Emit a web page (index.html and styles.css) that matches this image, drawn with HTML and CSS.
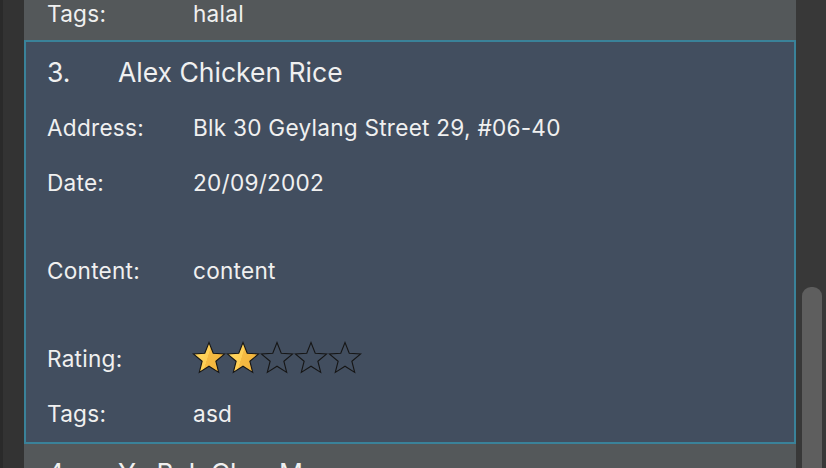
FILE: index.html
```html
<!DOCTYPE html>
<html>
<head>
<meta charset="utf-8">
<link rel="stylesheet" href="styles.css">
</head>
<body>
<svg class="defs" width="0" height="0">
  <defs>
    <linearGradient id="gold" x1="0" y1="0" x2="1" y2="0.3">
      <stop offset="0" stop-color="#ffd862"/>
      <stop offset="0.55" stop-color="#ffcf55"/>
      <stop offset="0.56" stop-color="#f6bb43"/>
      <stop offset="1" stop-color="#f3b53d"/>
    </linearGradient>
    <symbol id="star" viewBox="0 0 34 34">
      <polygon points="17,1.5 21.23,12.18 32.69,12.9 23.85,20.22 26.7,31.35 17,25.2 7.3,31.35 10.15,20.22 1.31,12.9 12.77,12.18"/>
    </symbol>
  </defs>
</svg>
<div class="app">
  <div class="gutter"></div>
  <div class="list">
    <div class="card partial">
      <div class="row tags-top"><span class="label">Tags:</span><span class="value">halal</span></div>
    </div>
    <div class="card selected">
      <div class="title"><span class="idx">3.</span><span class="name">Alex Chicken Rice</span></div>
      <div class="row r-address"><span class="label">Address:</span><span class="value">Blk 30 Geylang Street 29, #06-40</span></div>
      <div class="row r-date"><span class="label">Date:</span><span class="value">20/09/2002</span></div>
      <div class="row r-content"><span class="label">Content:</span><span class="value">content</span></div>
      <div class="row r-rating"><span class="label">Rating:</span>
        <span class="stars">
          <svg class="star on"><use href="#star"/></svg><svg class="star on"><use href="#star"/></svg><svg class="star"><use href="#star"/></svg><svg class="star"><use href="#star"/></svg><svg class="star"><use href="#star"/></svg>
        </span>
      </div>
      <div class="row r-tags"><span class="label">Tags:</span><span class="value">asd</span></div>
    </div>
    <div class="card next">
      <div class="title"><span class="idx">4.</span><span class="name">Ya Bak Chor Mee</span></div>
    </div>
  </div>
  <div class="scrollbar"><div class="thumb"></div></div>
</div>
</body>
</html>
```

FILE: styles.css
```css
html, body {
  margin: 0;
  padding: 0;
  width: 826px;
  height: 468px;
  overflow: hidden;
  background: #333333;
}
.defs { position: absolute; width: 0; height: 0; }
.app {
  display: flex;
  width: 826px;
  height: 468px;
  font-family: "Inter", "Noto Sans", sans-serif;
  color: #f0f0f0;
}
.gutter {
  width: 21px;
  border-left: 3px solid #2a2a2a;
  background: #333333;
  flex: none;
}
.list {
  width: 772px;
  flex: none;
  display: flex;
  flex-direction: column;
  overflow: hidden;
}
.card {
  background: #54585a;
  flex: none;
}
.partial {
  height: 40px;
  box-sizing: border-box;
  padding-left: 23px;
}
.row {
  display: flex;
  align-items: center;
  font-size: 22.6px;
  letter-spacing: 0.25px;
}
.label { width: 146px; flex: none; }
.tags-top { height: 26px; }
.selected {
  background: #424e5f;
  border: 2px solid #3a8299;
  height: 404px;
  box-sizing: border-box;
  padding: 0 0 0 21px;
}
.title {
  display: flex;
  align-items: center;
  font-size: 26.5px;
  height: 60px;
}
.idx { width: 71px; flex: none; }
.r-address { height: 50px; }
.r-date { height: 60px; }
.r-content { height: 116px; }
.r-rating { height: 60px; }
.r-tags { height: 50px; }
.stars { display: flex; margin-left: -1px; }
.star {
  width: 34px;
  height: 34px;
  fill: none;
  stroke: #161616;
  stroke-width: 1.1;
}
.star.on { fill: url(#gold); }
.next {
  flex: 1;
  padding: 4px 0 0 23px;
}
.next .title { height: 50px; }
.scrollbar {
  width: 30px;
  flex: none;
  background: #383838;
  padding: 287px 4px 0 6px;
  box-sizing: border-box;
}
.thumb {
  height: 200px;
  background: #5e5e5e;
  border-radius: 9px 9px 0 0;
}
```
